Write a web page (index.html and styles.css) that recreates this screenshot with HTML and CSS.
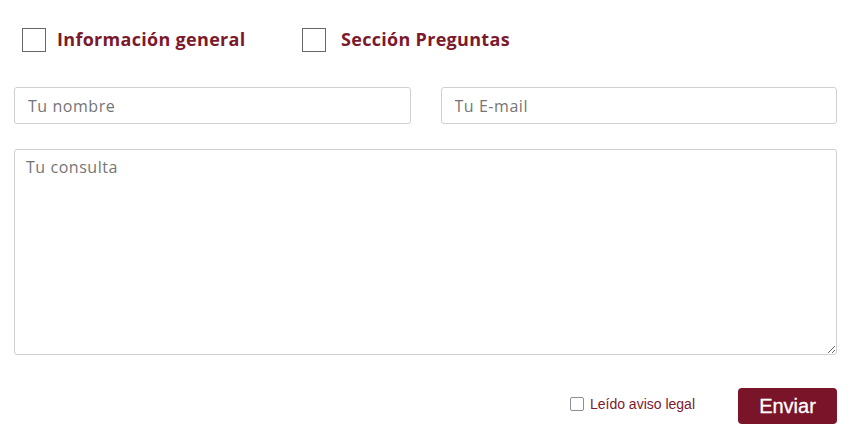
FILE: index.html
```html
<!DOCTYPE html>
<html lang="es">
<head>
<meta charset="utf-8">
<title>Contacto</title>
<link rel="stylesheet" href="styles.css">
</head>
<body>
<form class="form">
  <div class="topics">
    <label class="topic"><input type="checkbox" class="topic-box"><span class="topic-text">Información general</span></label>
    <label class="topic topic-wide"><input type="checkbox" class="topic-box"><span class="topic-text">Sección Preguntas</span></label>
  </div>
  <div class="fields">
    <input class="field" type="text" placeholder="Tu nombre">
    <input class="field" type="email" placeholder="Tu E-mail">
  </div>
  <textarea class="message" placeholder="Tu consulta"></textarea>
  <div class="actions">
    <label class="legal"><input type="checkbox" class="legal-box"><span>Leído aviso legal</span></label>
    <button type="button" class="send">Enviar</button>
  </div>
</form>
</body>
</html>
```
FILE: styles.css
```css
html, body {
  margin: 0;
  padding: 0;
  background: #ffffff;
}

.form {
  width: 823px;
  padding: 28px 0 0 14px;
  font-family: "Open Sans", "Liberation Sans", sans-serif;
}

.topics {
  display: flex;
  padding-left: 8px;
  height: 24px;
  align-items: center;
}

.topic {
  display: flex;
  align-items: center;
  width: 280px;
  cursor: pointer;
}

.topic-box {
  appearance: none;
  -webkit-appearance: none;
  width: 24px;
  height: 24px;
  margin: 0 11px 0 0;
  border: 1px solid #666666;
  background: #fff;
  box-sizing: border-box;
  flex: none;
}

.topic-wide .topic-box {
  margin-right: 15px;
}

.topic-text {
  font-size: 18px;
  font-weight: 700;
  color: #7b1a2d;
  letter-spacing: 0.3px;
  position: relative;
  top: -1px;
}

.fields {
  display: flex;
  gap: 30px;
  margin-top: 35px;
}

.field {
  flex: 1;
  height: 37px;
  box-sizing: border-box;
  border: 1px solid #cfd0d4;
  border-radius: 3px;
  padding: 0 13px;
  font-family: "Open Sans", "Liberation Sans", sans-serif;
  font-size: 16px;
  letter-spacing: 0.55px;
  color: #333;
  outline: none;
}

.field::placeholder,
.message::placeholder {
  color: #757575;
}

.message {
  display: block;
  width: 823px;
  height: 206px;
  margin-top: 25px;
  box-sizing: border-box;
  border: 1px solid #cfd0d4;
  border-radius: 3px;
  padding: 6px 11px;
  font-family: "Open Sans", "Liberation Sans", sans-serif;
  font-size: 16px;
  letter-spacing: 0.55px;
  line-height: 22px;
  color: #333;
  outline: none;
}

.actions {
  display: flex;
  justify-content: flex-end;
  align-items: center;
  margin-top: 33px;
}

.legal {
  display: flex;
  align-items: center;
  font-family: "Liberation Sans", Arial, sans-serif;
  font-size: 14px;
  color: #7b1a2d;
  margin-right: 43px;
  position: relative;
  top: -2px;
}

.legal-box {
  appearance: none;
  -webkit-appearance: none;
  width: 14px;
  height: 14px;
  margin: 0 6px 0 0;
  border: 1.5px solid #8d8d99;
  border-radius: 2px;
  box-sizing: border-box;
  background: #fff;
}

.send {
  width: 99px;
  height: 36px;
  border: none;
  border-radius: 4px;
  background: #7a1429;
  color: #ffffff;
  font-family: "Liberation Sans", Arial, sans-serif;
  font-size: 20px;
  padding: 0;
  cursor: pointer;
  -webkit-text-stroke: 0.3px #ffffff;
}
```
